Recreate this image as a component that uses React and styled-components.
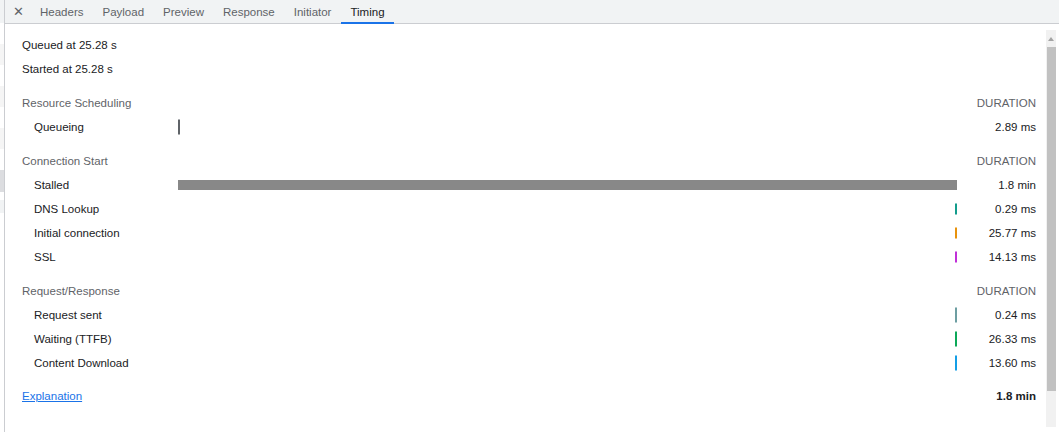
import React from "react";
import styled, { createGlobalStyle } from "styled-components";

const GlobalStyle = createGlobalStyle`
  html, body {
    margin: 0;
    padding: 0;
    background: #ffffff;
  }
  body {
    font-family: "Liberation Sans", Arial, sans-serif;
    font-size: 11.5px;
    color: #202124;
  }
`;

const tabs = ["Headers", "Payload", "Preview", "Response", "Initiator", "Timing"];

const sections = [
  {
    title: "Resource Scheduling",
    gap: 10,
    rows: [{ label: "Queueing", value: "2.89 ms", left: 0, width: 2, px: true, color: "#5f6368", height: 15 }],
  },
  {
    title: "Connection Start",
    gap: 10,
    rows: [
      { label: "Stalled", value: "1.8 min", left: 0, width: 100, color: "#888888", height: 10 },
      { label: "DNS Lookup", value: "0.29 ms", end: true, color: "#139c8c", height: 11 },
      { label: "Initial connection", value: "25.77 ms", end: true, color: "#e8920c", height: 11 },
      { label: "SSL", value: "14.13 ms", end: true, color: "#c030d8", height: 11 },
    ],
  },
  {
    title: "Request/Response",
    gap: 10,
    rows: [
      { label: "Request sent", value: "0.24 ms", end: true, color: "#6d9ea2", height: 15 },
      { label: "Waiting (TTFB)", value: "26.33 ms", end: true, color: "#0ca858", height: 15 },
      { label: "Content Download", value: "13.60 ms", end: true, color: "#149ee6", height: 15 },
    ],
  },
];

const Page = styled.div`
  display: flex;
  width: 1059px;
  height: 432px;
  overflow: hidden;
`;

const RequestList = styled.div`
  width: 4px;
  flex: none;
  border-right: 1px solid #cbcdd1;
  background: linear-gradient(
    to bottom,
    #f1f3f4 0 23px,
    #ffffff 23px 44px,
    #f5f5f5 44px 65px,
    #ffffff 65px 86px,
    #f5f5f5 86px 107px,
    #ffffff 107px 128px,
    #f5f5f5 128px 149px,
    #ffffff 149px 170px,
    #dcdde0 170px 192px,
    #ffffff 192px 200px,
    #f1f3f4 200px 213px,
    #ffffff 213px
  );
`;

const Main = styled.div`
  flex: 1;
  display: flex;
  flex-direction: column;
  min-width: 0;
`;

const TabBar = styled.div`
  height: 23px;
  flex: none;
  display: flex;
  align-items: stretch;
  background: #f1f3f4;
  border-bottom: 1px solid #cbcdd1;
`;

const CloseButton = styled.div`
  width: 25px;
  display: flex;
  align-items: center;
  justify-content: center;
  color: #5f6368;
  font-size: 13px;
  padding-left: 1px;
`;

const Tab = styled.div`
  position: relative;
  display: flex;
  align-items: center;
  padding: 0 9px;
  margin-right: 1px;
  color: ${(p) => (p.$active ? "#202124" : "#5f6368")};
  font-size: 11.5px;
  &::after {
    content: "";
    position: absolute;
    left: 0;
    right: 0;
    bottom: -1px;
    height: 2px;
    background: ${(p) => (p.$active ? "#1a73e8" : "transparent")};
  }
`;

const Body = styled.div`
  flex: 1;
  display: flex;
  min-height: 0;
`;

const Content = styled.div`
  flex: 1;
  padding: 9px 10px 0 17px;
  min-width: 0;
`;

const Row = styled.div`
  height: 24px;
  display: grid;
  grid-template-columns: 156px 1fr 79px;
  align-items: center;
  margin-top: ${(p) => p.$gap || 0}px;
`;

const InfoLine = styled.div`
  height: 24px;
  display: flex;
  align-items: center;
`;

const SectionTitle = styled.div`
  color: #5f6368;
`;

const Label = styled.div`
  padding-left: 12px;
  white-space: nowrap;
`;

const Duration = styled.div`
  text-align: right;
  white-space: nowrap;
  color: ${(p) => (p.$muted ? "#5f6368" : "#202124")};
  font-weight: ${(p) => (p.$bold ? 700 : 400)};
`;

const BarTrack = styled.div`
  position: relative;
  height: 15px;
`;

const Bar = styled.div`
  position: absolute;
  top: 50%;
  transform: translateY(-50%);
`;

const Link = styled.a`
  color: #1a73e8;
  text-decoration: underline;
  cursor: pointer;
`;

const Scrollbar = styled.div`
  width: 10px;
  flex: none;
  margin: 6px 3px 5px 0;
  background: #f1f1f1;
  display: flex;
  flex-direction: column;
  align-items: center;
`;

const ArrowUp = styled.div`
  height: 17px;
  display: flex;
  align-items: center;
  justify-content: center;
  &::before {
    content: "";
    border-left: 3.5px solid transparent;
    border-right: 3.5px solid transparent;
    border-bottom: 4px solid #a3a3a3;
  }
`;

const Thumb = styled.div`
  width: 9px;
  height: 344px;
  background: #c1c1c1;
  margin-left: 1px;
`;

const TimingBar = ({ row }) => {
  const style = row.end
    ? { right: 0, width: 2, height: row.height, background: row.color }
    : {
        left: `${row.left}%`,
        width: row.px ? row.width : `${row.width}%`,
        height: row.height,
        background: row.color,
      };
  return (
    <BarTrack>
      <Bar style={style} />
    </BarTrack>
  );
};

export default function App() {
  return (
    <>
      <GlobalStyle />
      <Page>
        <RequestList />
        <Main>
          <TabBar>
            <CloseButton>✕</CloseButton>
            {tabs.map((t) => (
              <Tab key={t} $active={t === "Timing"}>
                {t}
              </Tab>
            ))}
          </TabBar>
          <Body>
            <Content>
              <InfoLine>Queued at 25.28 s</InfoLine>
              <InfoLine>Started at 25.28 s</InfoLine>
              {sections.map((s) => (
                <React.Fragment key={s.title}>
                  <Row $gap={s.gap}>
                    <SectionTitle>{s.title}</SectionTitle>
                    <div />
                    <Duration $muted>DURATION</Duration>
                  </Row>
                  {s.rows.map((r) => (
                    <Row key={r.label}>
                      <Label>{r.label}</Label>
                      <TimingBar row={r} />
                      <Duration>{r.value}</Duration>
                    </Row>
                  ))}
                </React.Fragment>
              ))}
              <Row $gap={9}>
                <div>
                  <Link>Explanation</Link>
                </div>
                <div />
                <Duration $bold>1.8 min</Duration>
              </Row>
            </Content>
            <Scrollbar>
              <ArrowUp />
              <Thumb />
            </Scrollbar>
          </Body>
        </Main>
      </Page>
    </>
  );
}
